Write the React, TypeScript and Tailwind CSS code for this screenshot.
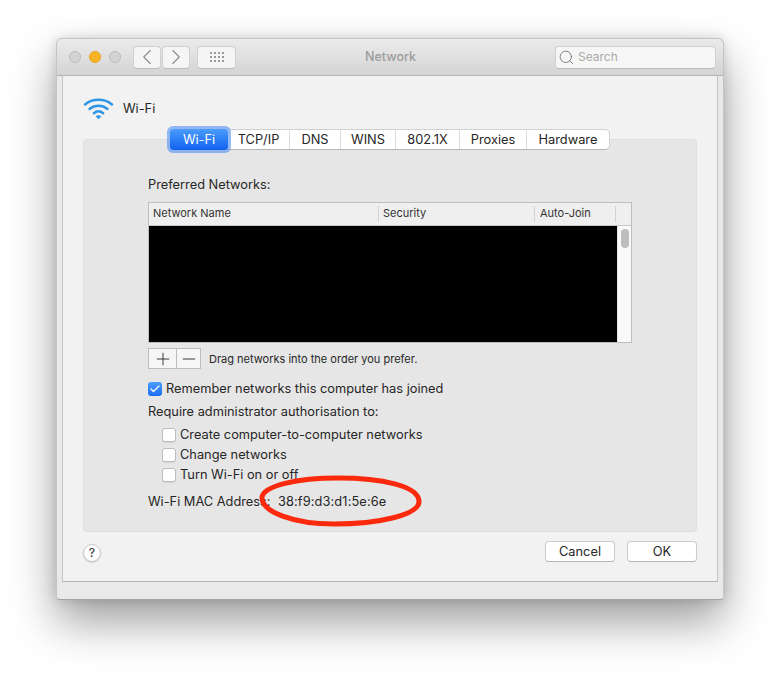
import { Check, ChevronLeft, ChevronRight, Minus, Plus, Search } from 'lucide-react';

const tabs = [
  { label: 'TCP/IP', w: 'w-[62px]' },
  { label: 'DNS', w: 'w-[51px]' },
  { label: 'WINS', w: 'w-[55px]' },
  { label: '802.1X', w: 'w-[64px]' },
  { label: 'Proxies', w: 'w-[67px]' },
  { label: 'Hardware', w: 'w-[82px]' },
];

function Traffic({ color }: { color: string }) {
  return <div className={`w-3 h-3 rounded-full border ${color}`} />;
}

function CheckRow({ label }: { label: string }) {
  return (
    <div className="flex items-center h-5 pl-[14px] gap-[4px]">
      <div className="w-[14px] h-[14px] bg-white rounded-[3px] border border-[#bdbdbd] shadow-[0_1px_1px_rgba(0,0,0,0.08)]" />
      <span>{label}</span>
    </div>
  );
}

function WifiIcon() {
  return (
    <svg width="32" height="26" viewBox="0 0 32 26" fill="none" className="text-[#2f96e6]">
      <path d="M2 9.5C9.5 3.2 21.5 3.2 29 9.5" stroke="currentColor" strokeWidth="2.4" strokeLinecap="round" />
      <path d="M6.5 14C11.8 9.7 19.2 9.7 24.5 14" stroke="currentColor" strokeWidth="2.4" strokeLinecap="round" />
      <path d="M10.8 18.2C13.8 15.8 17.2 15.8 20.2 18.2" stroke="currentColor" strokeWidth="2.4" strokeLinecap="round" />
      <path d="M15.5 24.2L12.6 21.2C14.5 20 16.5 20 18.4 21.2Z" fill="currentColor" />
    </svg>
  );
}

export default function App() {
  return (
    <div className="relative w-[780px] h-[675px] bg-white overflow-hidden pt-[38px] pl-[56px] font-['Inter','Liberation_Sans',sans-serif] text-[12.8px] text-[#262626]">
      <div className="w-[668px] h-[562px] flex flex-col rounded-t-[6px] rounded-b-[4px] bg-[#e9e9e9] border border-[#c4c4c4] border-b-[#a3a3a3] shadow-[0_22px_45px_rgba(0,0,0,0.38),0_0_12px_rgba(0,0,0,0.14)]">
        {/* title bar */}
        <div className="relative h-[37px] shrink-0 flex items-center pl-3 pr-[7px] bg-gradient-to-b from-[#ebebeb] to-[#d4d4d4] border-b border-[#b4b4b4] rounded-t-[6px]">
          <div className="flex gap-2 w-[64px]">
            <Traffic color="bg-[#d3d3d3] border-[#bababa]" />
            <Traffic color="bg-[#f9b426] border-[#e3a21e]" />
            <Traffic color="bg-[#d3d3d3] border-[#bababa]" />
          </div>
          <div className="flex gap-px">
            <div className="w-[28px] h-[23px] flex items-center justify-center bg-[#f5f5f5] rounded-[4px] border border-[#d0d0d0] border-b-[#b9b9b9]">
              <ChevronLeft size={26} strokeWidth={1.05} className="text-[#8c8c8c] shrink-0" />
            </div>
            <div className="w-[28px] h-[23px] flex items-center justify-center bg-[#f5f5f5] rounded-[4px] border border-[#d0d0d0] border-b-[#b9b9b9]">
              <ChevronRight size={26} strokeWidth={1.05} className="text-[#8c8c8c] shrink-0" />
            </div>
          </div>
          <div className="ml-[7px] w-[39px] h-[23px] flex items-center justify-center bg-[#f5f5f5] rounded-[4px] border border-[#d0d0d0] border-b-[#b9b9b9]">
            <div className="grid grid-cols-4 gap-[2px]">
              {Array.from({ length: 12 }).map((_, i) => (
                <div key={i} className="w-[2px] h-[2px] bg-[#9a9a9a]" />
              ))}
            </div>
          </div>
          <div className="flex-1 text-center text-[#9b9b9b] font-medium text-[12.5px] pr-[10px]">Network</div>
          <div className="w-[161px] h-[23px] flex items-center gap-[3px] pl-[2px] bg-[#f6f6f6] rounded-[4px] border border-[#d0d0d0] border-b-[#b9b9b9] text-[12px] text-[#a9a9a9]">
            <Search size={17} strokeWidth={1.2} className="text-[#6e6e6e]" />
            <span>Search</span>
          </div>
        </div>

        {/* pane */}
        <div className="mx-[5px] h-[506px] shrink-0 bg-[#f2f2f2] border-b border-x border-[#c4c4c4] border-b-[#b2b2b2] px-[20px]">
          <div className="h-[63px] flex items-start pt-[19px] gap-[8px]">
            <WifiIcon />
            <span className="mt-[4px]">Wi-Fi</span>
          </div>
          <div className="relative w-[614px] h-[393px] bg-[#e6e6e6] rounded-[4px] border border-[#dedede] pl-[64px]">
            {/* tabs lie over the panel edge */}
            <div className="absolute -top-[11px] left-[86px] flex items-stretch h-[21px] w-[440px]">
              <div className="relative z-10 w-[58px] h-[21px] flex items-center justify-center rounded-[3px] bg-gradient-to-b from-[#4a9cfb] to-[#1360f0] text-white shadow-[0_0_0_3px_rgba(90,150,240,0.65)]">
                Wi-Fi
              </div>
              <div className="flex flex-1 bg-white rounded-r-[5px] border border-[#d0d0d0] border-b-[#b5b5b5] border-l-0">
                {tabs.map((t, i) => (
                  <div
                    key={t.label}
                    className={`${t.w} flex items-center justify-center ${i < tabs.length - 1 ? 'border-r border-[#dcdcdc]' : ''}`}
                  >
                    {t.label}
                  </div>
                ))}
              </div>
            </div>

            <div className="pt-[36px] h-[62px] leading-[18px]">Preferred Networks:</div>

            {/* network table */}
            <div className="w-[484px] h-[141px] flex flex-col border border-[#bebebe] bg-white">
              <div className="h-[23px] shrink-0 flex items-center text-[11px] text-[#333] bg-[#efefef] border-b border-[#c8c8c8]">
                <div className="w-[230px] pl-[4px] pb-px h-[16px] flex items-center border-r border-[#d2d2d2]">Network Name</div>
                <div className="w-[156px] pl-[4px] pb-px h-[16px] flex items-center border-r border-[#d2d2d2]">Security</div>
                <div className="w-[81px] pl-[5px] pb-px h-[16px] flex items-center border-r border-[#d2d2d2]">Auto-Join</div>
              </div>
              <div className="flex-1 flex min-h-0">
                <div className="w-[468px] bg-black" />
                <div className="flex-1 bg-[#fafafa] border-l border-[#e4e4e4] pt-[3px] flex justify-center">
                  <div className="w-[8px] h-[19px] rounded-full bg-[#bdbdbd]" />
                </div>
              </div>
            </div>

            {/* add / remove */}
            <div className="flex items-center mt-[5px] h-[21px] gap-[8px]">
              <div className="flex w-[53px] h-[21px] border border-[#bcbcbc] bg-[#f6f6f6]">
                <div className="w-[28px] flex items-center justify-center border-r border-[#bcbcbc]">
                  <Plus size={20} strokeWidth={1.15} className="text-[#333] shrink-0" />
                </div>
                <div className="flex-1 flex items-center justify-center">
                  <Minus size={20} strokeWidth={1.15} className="text-[#333] shrink-0" />
                </div>
              </div>
              <span className="text-[11px] pt-px">Drag networks into the order you prefer.</span>
            </div>

            <div className="flex items-center h-5 mt-[10px] gap-[4px]">
              <div className="w-[14px] h-[14px] rounded-[3px] bg-gradient-to-b from-[#4c9dfa] to-[#1a6bf0] flex items-center justify-center">
                <Check size={12} strokeWidth={2.6} className="text-white" />
              </div>
              <span>Remember networks this computer has joined</span>
            </div>
            <div className="h-5 mt-[3px] flex items-center">Require administrator authorisation to:</div>
            <div className="mt-[3px]">
              <CheckRow label="Create computer-to-computer networks" />
              <CheckRow label="Change networks" />
              <CheckRow label="Turn Wi-Fi on or off" />
            </div>
            <div className="flex items-center h-5 mt-[7px]">
              <span className="w-[130px]">Wi-Fi MAC Address:</span>
              <span className="tracking-[0.12px]">38:f9:d3:d1:5e:6e</span>
            </div>
          </div>

          <div className="flex items-start justify-between h-[50px] pt-[9px]">
            <div className="mt-[3px] w-[18px] h-[18px] flex items-center justify-center rounded-full bg-white border border-[#c6c6c6] shadow-[0_1px_1px_rgba(0,0,0,0.12)] text-[12px] font-medium text-[#444]">
              ?
            </div>
            <div className="flex gap-[12px]">
              <div className="w-[70px] h-[21px] flex items-center justify-center rounded-[4px] bg-white border border-[#cbcbcb] border-b-[#b5b5b5]">Cancel</div>
              <div className="w-[70px] h-[21px] flex items-center justify-center rounded-[4px] bg-white border border-[#cbcbcb] border-b-[#b5b5b5]">OK</div>
            </div>
          </div>
        </div>
      </div>

      {/* red annotation drawn over the screenshot */}
      <svg className="absolute left-[256px] top-[470px]" width="170" height="60" viewBox="0 0 170 60" fill="none">
        <path
          d="M6 27C8 16 40 8 82 8C126 8 162 16 163 31C164 45 122 54 78 54C38 54 5 42 6 27Z"
          stroke="#fb2a0c"
          strokeWidth="5"
        />
      </svg>
    </div>
  );
}
